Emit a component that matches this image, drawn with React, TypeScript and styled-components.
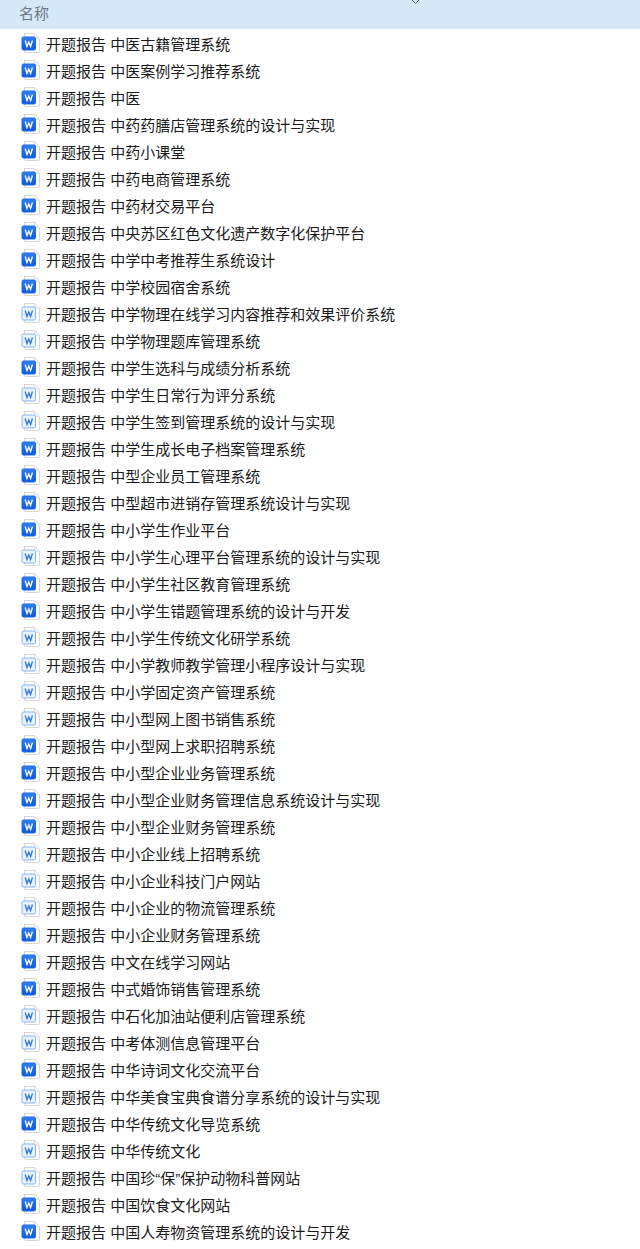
import React from "react";
import styled, { createGlobalStyle } from "styled-components";

const Global = createGlobalStyle`
  html, body { margin: 0; padding: 0; background: #fff; }
`;

const Page = styled.div`
  width: 640px;
  height: 1249px;
  overflow: hidden;
  font-family: "Liberation Sans", "Noto Sans CJK SC", sans-serif;
`;

const Header = styled.div`
  position: relative;
  height: 29px;
  background: #d6e8f7;
  display: flex;
  align-items: center;
  padding-left: 19px;
  padding-bottom: 5px;
  box-sizing: border-box;
  font-size: 15px;
  color: #6b7785;
`;

const Caret = styled.svg`
  position: absolute;
  left: 411px;
  top: 0;
`;

const List = styled.div`
  display: flex;
  flex-direction: column;
  padding-top: 1px;
`;

const Row = styled.div`
  height: 27px;
  display: flex;
  align-items: center;
  padding-left: 21px;
  gap: 5px;
  font-size: 15px;
  color: #1a1a1a;
  white-space: nowrap;
`;

const Icon = styled.svg`
  flex: none;
`;

const items: [string, boolean][] = [
  ["中医古籍管理系统", false], ["中医案例学习推荐系统", false], ["中医", false], ["中药药膳店管理系统的设计与实现", false], ["中药小课堂", false],
  ["中药电商管理系统", false], ["中药材交易平台", false], ["中央苏区红色文化遗产数字化保护平台", false], ["中学中考推荐生系统设计", false], ["中学校园宿舍系统", false],
  ["中学物理在线学习内容推荐和效果评价系统", true], ["中学物理题库管理系统", true], ["中学生选科与成绩分析系统", false], ["中学生日常行为评分系统", true], ["中学生签到管理系统的设计与实现", true],
  ["中学生成长电子档案管理系统", false], ["中型企业员工管理系统", false], ["中型超市进销存管理系统设计与实现", false], ["中小学生作业平台", false], ["中小学生心理平台管理系统的设计与实现", true],
  ["中小学生社区教育管理系统", false], ["中小学生错题管理系统的设计与开发", false], ["中小学生传统文化研学系统", true], ["中小学教师教学管理小程序设计与实现", true], ["中小学固定资产管理系统", true],
  ["中小型网上图书销售系统", true], ["中小型网上求职招聘系统", false], ["中小型企业业务管理系统", false], ["中小型企业财务管理信息系统设计与实现", false], ["中小型企业财务管理系统", false],
  ["中小企业线上招聘系统", true], ["中小企业科技门户网站", true], ["中小企业的物流管理系统", true], ["中小企业财务管理系统", false], ["中文在线学习网站", false],
  ["中式婚饰销售管理系统", false], ["中石化加油站便利店管理系统", true], ["中考体测信息管理平台", true], ["中华诗词文化交流平台", false], ["中华美食宝典食谱分享系统的设计与实现", true],
  ["中华传统文化导览系统", false], ["中华传统文化", true], ["中国珍“保”保护动物科普网站", true], ["中国饮食文化网站", false], ["中国人寿物资管理系统的设计与开发", false],
];

function DocIcon({ light }: { light: boolean }) {
  return (
    <Icon width="20" height="22" viewBox="0 0 20 22">
      <defs>
        <linearGradient id="wordBlue" x1="0" y1="0" x2="0" y2="1">
          <stop offset="0" stopColor="#2f80f2" />
          <stop offset="1" stopColor="#0c58dc" />
        </linearGradient>
      </defs>
      <path d="M3.5 0.5 H13.5 L18.5 5.5 V18 a1.5 1.5 0 0 1 -1.5 1.5 H5 a1.5 1.5 0 0 1 -1.5 -1.5 Z" fill="#fff" stroke="#d8d8d8" strokeWidth="1.2" />
      <path d="M13.5 0.5 V5.5 H18.5" fill="#f4f4f4" stroke="#e2e2e2" />
      <rect
        x="1"
        y="4"
        width="13.5"
        height="13"
        rx="1.5"
        fill={light ? "#e9f2ff" : "url(#wordBlue)"}
        stroke={light ? "#86b3f3" : "#1a6ae6"}
      />
      <path
        d="M4.2 7.5 L6 13.5 L7.8 9 L9.6 13.5 L11.4 7.5"
        fill="none"
        stroke={light ? "#2b76e5" : "#fff"}
        strokeWidth="1.3"
      />
    </Icon>
  );
}

export default function App() {
  return (
    <Page>
      <Global />
      <Header>
        名称
        <Caret width="9" height="4" viewBox="0 0 9 4">
          <path d="M1 0 L4.5 3.5 L8 0" fill="none" stroke="#666" />
        </Caret>
      </Header>
      <List>
        {items.map(([t, l]) => (
          <Row key={t}>
            <DocIcon light={l} />
            <span>开题报告 {t}</span>
          </Row>
        ))}
      </List>
    </Page>
  );
}
